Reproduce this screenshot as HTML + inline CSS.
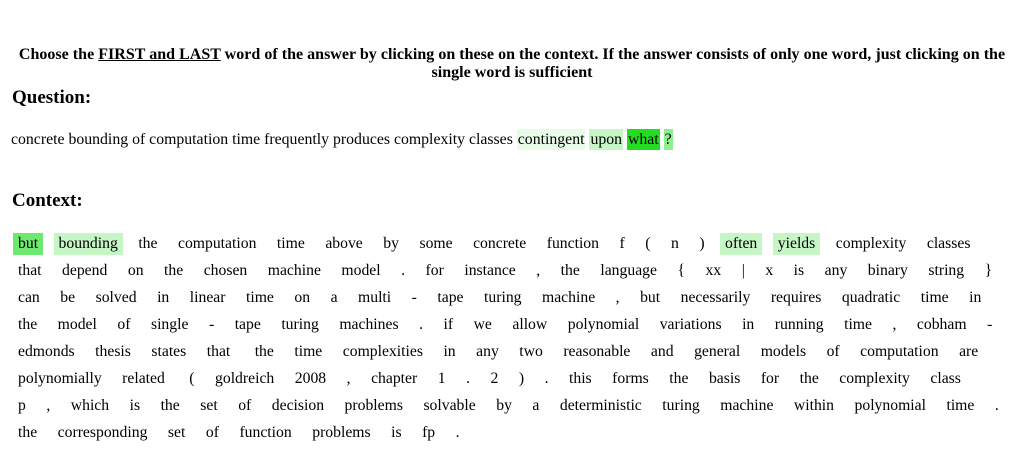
<!DOCTYPE html>
<html><head><style>
body{margin:0;width:1024px;height:460px;background:#fff;font-family:"Liberation Serif",serif;color:#000;position:relative;overflow:hidden}
.h{position:absolute;left:0;width:1024px;top:46px;text-align:center;font-weight:bold;font-size:16px;line-height:18px;letter-spacing:0.02px}
.t{position:absolute;left:12px;font-weight:bold;font-size:19px}
.q{position:absolute;left:11px;top:131px;font-size:15.8px;white-space:nowrap}
.q span{padding:2px 1px}
.c{position:absolute;left:13px;top:233px;font-size:15.7px}
.l{height:27px;white-space:nowrap;line-height:22px}
.l span{padding:0 5px;margin-right:10.5px;display:inline-block;height:22px}
.g1{background:#6ee86e}.g2{background:#c6f5c6}.g3{background:#e8fbe8}.g4{background:#22dd22}.g5{background:#8ef08e}
</style></head><body>
<div class="h">Choose the <u>FIRST and LAST</u> word of the answer by clicking on these on the context. If the answer consists of only one word, just clicking on the<br>single word is sufficient</div>
<div class="t" style="top:87px">Question:</div>
<div class="q">concrete bounding of computation time frequently produces complexity classes <span class="g3">contingent</span> <span class="g2">upon</span> <span class="g4">what</span> <span class="g5">?</span></div>
<div class="t" style="top:190px">Context:</div>
<div class="c">
<div class="l"><span class="g1">but</span><span class="g2">bounding</span><span>the</span><span>computation</span><span>time</span><span>above</span><span>by</span><span>some</span><span>concrete</span><span>function</span><span>f</span><span>(</span><span>n</span><span>)</span><span class="g2">often</span><span class="g2">yields</span><span>complexity</span><span>classes</span></div>
<div class="l"><span>that</span><span>depend</span><span>on</span><span>the</span><span>chosen</span><span>machine</span><span>model</span><span>.</span><span>for</span><span>instance</span><span>,</span><span>the</span><span>language</span><span>{</span><span>xx</span><span>|</span><span>x</span><span>is</span><span>any</span><span>binary</span><span>string</span><span>}</span></div>
<div class="l"><span>can</span><span>be</span><span>solved</span><span>in</span><span>linear</span><span>time</span><span>on</span><span>a</span><span>multi</span><span>-</span><span>tape</span><span>turing</span><span>machine</span><span>,</span><span>but</span><span>necessarily</span><span>requires</span><span>quadratic</span><span>time</span><span>in</span></div>
<div class="l"><span>the</span><span>model</span><span>of</span><span>single</span><span>-</span><span>tape</span><span>turing</span><span>machines</span><span>.</span><span>if</span><span>we</span><span>allow</span><span>polynomial</span><span>variations</span><span>in</span><span>running</span><span>time</span><span>,</span><span>cobham</span><span>-</span></div>
<div class="l"><span>edmonds</span><span>thesis</span><span>states</span><span>that</span><span>&nbsp;the</span><span>time</span><span>complexities</span><span>in</span><span>any</span><span>two</span><span>reasonable</span><span>and</span><span>general</span><span>models</span><span>of</span><span>computation</span><span>are</span></div>
<div class="l"><span>polynomially</span><span>related</span><span>&nbsp;(</span><span>goldreich</span><span>2008</span><span>,</span><span>chapter</span><span>1</span><span>.</span><span>2</span><span>)</span><span>.</span><span>this</span><span>forms</span><span>the</span><span>basis</span><span>for</span><span>the</span><span>complexity</span><span>class</span></div>
<div class="l"><span>p</span><span>,</span><span>which</span><span>is</span><span>the</span><span>set</span><span>of</span><span>decision</span><span>problems</span><span>solvable</span><span>by</span><span>a</span><span>deterministic</span><span>turing</span><span>machine</span><span>within</span><span>polynomial</span><span>time</span><span>.</span></div>
<div class="l"><span>the</span><span>corresponding</span><span>set</span><span>of</span><span>function</span><span>problems</span><span>is</span><span>fp</span><span>.</span></div>
</div>
</body></html>
